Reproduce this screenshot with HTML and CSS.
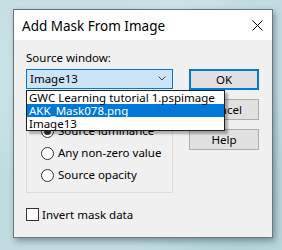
FILE: index.html
```html
<!DOCTYPE html>
<html>
<head>
    <title>Add Mask From Image</title>
    <link rel="stylesheet" href="styles.css">
</head>
<body>
    <div class="dialog">
        <div class="titlebar">
            <span class="title">Add Mask From Image</span>
            <svg class="close" width="11" height="11" viewBox="0 0 11 11">
                <path d="M0.5 0.5 L10.5 10.5 M10.5 0.5 L0.5 10.5" stroke="#000" stroke-width="1" fill="none"/>
            </svg>
        </div>
        <div class="content">
            <div class="left">
                <div class="label">Source window:</div>
                <div class="combo-wrap">
                    <div class="combo">
                        <span>Image13</span>
                        <svg class="chevron" width="8" height="5" viewBox="0 0 8 5">
                            <path d="M0.5 0.5 L4 4 L7.5 0.5" stroke="#444" stroke-width="1" fill="none"/>
                        </svg>
                    </div>
                    <ul class="dropdown">
                        <li>GWC Learning tutorial 1.pspimage</li>
                        <li class="selected">AKK_Mask078.png</li>
                        <li>Image13</li>
                    </ul>
                </div>
                <div class="group">
                    <label class="radio"><span class="circle checked"></span>Source luminance</label>
                    <label class="radio"><span class="circle"></span>Any non-zero value</label>
                    <label class="radio"><span class="circle"></span>Source opacity</label>
                </div>
                <label class="check"><span class="box"></span>Invert mask data</label>
            </div>
            <div class="buttons">
                <button class="btn default">OK</button>
                <button class="btn">Cancel</button>
                <button class="btn">Help</button>
            </div>
        </div>
    </div>
</body>
</html>
```

FILE: styles.css
```css
body {
    margin: 0;
    padding: 9px 0 0 13px;
    height: 250px;
    box-sizing: border-box;
    font-family: "Noto Sans", "Open Sans", sans-serif;
    font-size: 11.5px;
    color: #000;
    background-color: #c0dce1;
    background-image:
        radial-gradient(circle at 20% 30%, #d3e8ec 0, transparent 40%),
        radial-gradient(circle at 85% 80%, #aacdd3 0, transparent 35%),
        radial-gradient(circle at 60% 10%, #cfe5e9 0, transparent 30%);
    overflow: hidden;
}

.dialog {
    width: 260px;
    height: 229px;
    box-sizing: border-box;
    border: 1px solid #6a7780;
    background-color: #f0f0f0;
    box-shadow: 2px 3px 6px rgba(40, 60, 70, 0.45);
}

.titlebar {
    height: 30px;
    background-color: #fff;
    display: flex;
    align-items: center;
    justify-content: space-between;
    padding: 0 9px 0 8px;
}

.title {
    font-size: 13.5px;
    line-height: 30px;
    padding-top: 1px;
}

.close {
    display: block;
}

.content {
    display: flex;
    padding-left: 12px;
}

.left {
    width: 147px;
    padding-top: 10px;
}

.label {
    line-height: 15px;
}

.combo-wrap {
    position: relative;
    margin-top: 4px;
}

.combo {
    height: 20px;
    box-sizing: border-box;
    border: 1px solid #0078d7;
    background-color: #cce4f7;
    display: flex;
    align-items: center;
    justify-content: space-between;
    padding: 0 6px 0 3px;
    line-height: 18px;
}

.chevron {
    display: block;
    margin-bottom: 1px;
}

/* open list, drawn over the group box */
.dropdown {
    position: absolute;
    top: 21px;
    left: 0;
    width: 197px;
    margin: 0;
    padding: 0;
    list-style: none;
    background-color: #fff;
    border: 1px solid #1e1e1e;
    box-shadow: 3px 3px 2px rgba(0, 0, 0, 0.28);
    z-index: 2;
}

.dropdown li {
    height: 13px;
    line-height: 13px;
    padding-left: 2px;
    white-space: nowrap;
}

.dropdown li.selected {
    background-color: #0078d7;
    color: #fff;
}

.group {
    margin-top: 10px;
    border: 1px solid #dcdcdc;
    padding: 20px 0 6px 14px;
}

.radio {
    display: flex;
    align-items: center;
    height: 22px;
    line-height: 22px;
}

.circle {
    width: 13px;
    height: 13px;
    box-sizing: border-box;
    border: 1px solid #333;
    border-radius: 50%;
    background-color: #fff;
    margin-right: 4px;
    display: flex;
    align-items: center;
    justify-content: center;
}

.circle.checked::after {
    content: "";
    width: 7px;
    height: 7px;
    border-radius: 50%;
    background-color: #333;
}

.check {
    display: flex;
    align-items: center;
    margin-top: 14px;
    line-height: 15px;
}

.box {
    width: 13px;
    height: 13px;
    box-sizing: border-box;
    border: 1px solid #333;
    background-color: #fff;
    margin-right: 3px;
}

.buttons {
    display: flex;
    flex-direction: column;
    gap: 9px;
    padding-top: 29px;
    margin-left: 16px;
}

.btn {
    width: 70px;
    height: 21px;
    box-sizing: border-box;
    border: 1px solid #adadad;
    background-color: #e1e1e1;
    font-family: "Noto Sans", "Open Sans", sans-serif;
    font-size: 11.5px;
    color: #000;
    padding: 0;
    line-height: 18px;
}

.btn.default {
    border: 2px solid #0078d7;
}
```
